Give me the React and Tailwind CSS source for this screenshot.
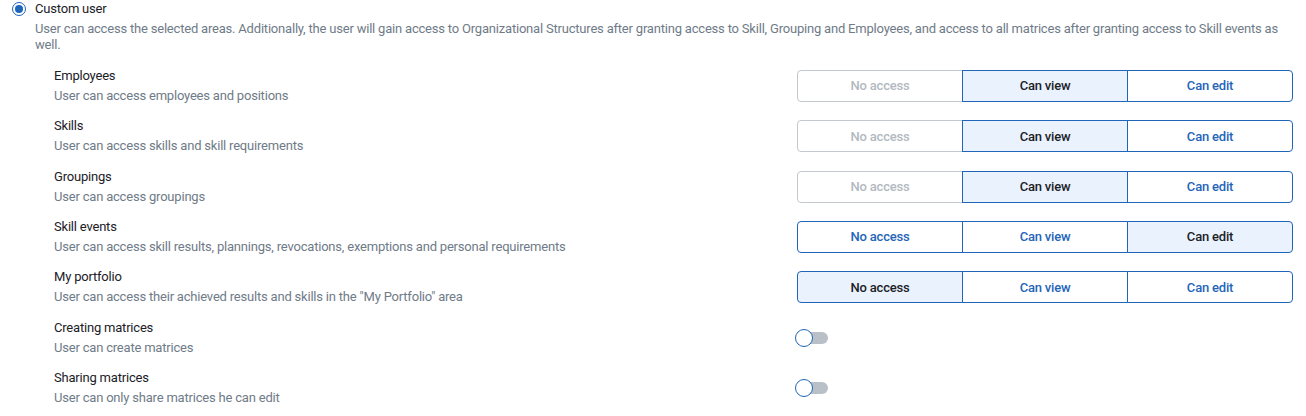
import React, { useState } from "react";

const OPTIONS = ["No access", "Can view", "Can edit"];

const AREAS = [
  { title: "Employees", desc: "User can access employees and positions", value: 1, locked: true },
  { title: "Skills", desc: "User can access skills and skill requirements", value: 1, locked: true },
  { title: "Groupings", desc: "User can access groupings", value: 1, locked: true },
  { title: "Skill events", desc: "User can access skill results, plannings, revocations, exemptions and personal requirements", value: 2 },
  { title: "My portfolio", desc: 'User can access their achieved results and skills in the "My Portfolio" area', value: 0 },
];

const SWITCHES = [
  { title: "Creating matrices", desc: "User can create matrices" },
  { title: "Sharing matrices", desc: "User can only share matrices he can edit" },
];

const Segmented = ({ value, locked, onChange }) => (
  <div className="flex w-[496px] h-[32px]">
    {OPTIONS.map((opt, i) => {
      const selected = i === value;
      const disabled = locked && i === 0;
      let cls = "border-[#1f65b9] text-[#1f65b9] bg-white";
      if (selected) cls = "border-[#1f65b9] text-[#1c2127] bg-[#eaf3fd] z-10";
      if (disabled) cls = "border-[#c3c8cf] text-[#b3b9c1] bg-white";
      return (
        <button
          key={opt}
          disabled={disabled}
          onClick={() => onChange(i)}
          className={`flex-1 border text-[13px] font-medium ${i > 0 ? "-ml-px" : ""} ${i === 0 ? "rounded-l-[4px]" : ""} ${i === 2 ? "rounded-r-[4px]" : ""} ${cls}`}
        >
          {opt}
        </button>
      );
    })}
  </div>
);

const Toggle = ({ on, onClick }) => (
  <button onClick={onClick} className="relative -ml-[2px] w-[33px] h-[20px] flex items-center">
    <span className="absolute left-[8px] right-0 h-[12px] rounded-full bg-[#b9c0c8]" />
    <span className={`absolute ${on ? "left-[15px]" : "left-0"} w-[18px] h-[18px] rounded-full bg-white border-[1.5px] border-[#1f65b9]`} />
  </button>
);

const Row = ({ title, desc, children }) => (
  <div className="flex items-center h-[50.33px] pl-[54px] pr-[13px]">
    <div className="flex-1">
      <div className="text-[13px] leading-[18px] text-[#1c2127]">{title}</div>
      <div className="text-[13px] leading-[18px] mt-[2px] text-[#6f7b88]">{desc}</div>
    </div>
    <div className="w-[496px]">{children}</div>
  </div>
);

export default function App() {
  const [values, setValues] = useState(AREAS.map(a => a.value));
  const [switches, setSwitches] = useState([false, false]);

  return (
    <div className="bg-white w-[1306px] h-[416px] overflow-hidden tracking-[-0.2px]" style={{ fontFamily: "Roboto, sans-serif" }}>
      <div className="flex items-center pl-[12px] h-[17px]">
        <span className="w-[14px] h-[14px] rounded-full border-[1.5px] border-[#1f65b9] flex items-center justify-center">
          <span className="w-[8px] h-[8px] rounded-full bg-[#1f65b9]" />
        </span>
        <span className="ml-[9px] text-[13px] text-[#1c2127]">Custom user</span>
      </div>
      <p className="pl-[35px] pr-[12px] mt-[4px] text-[13px] leading-[16px] text-[#6f7b88]">
        User can access the selected areas. Additionally, the user will gain access to Organizational Structures after granting access to Skill, Grouping and Employees, and access to all matrices after granting access to Skill events as well.
      </p>
      <div className="mt-[8px]">
        {AREAS.map((a, idx) => (
          <Row key={a.title} title={a.title} desc={a.desc}>
            <Segmented
              value={values[idx]}
              locked={a.locked}
              onChange={v => setValues(values.map((x, j) => (j === idx ? v : x)))}
            />
          </Row>
        ))}
        {SWITCHES.map((s, idx) => (
          <Row key={s.title} title={s.title} desc={s.desc}>
            <Toggle
              on={switches[idx]}
              onClick={() => setSwitches(switches.map((x, j) => (j === idx ? !x : x)))}
            />
          </Row>
        ))}
      </div>
    </div>
  );
}
